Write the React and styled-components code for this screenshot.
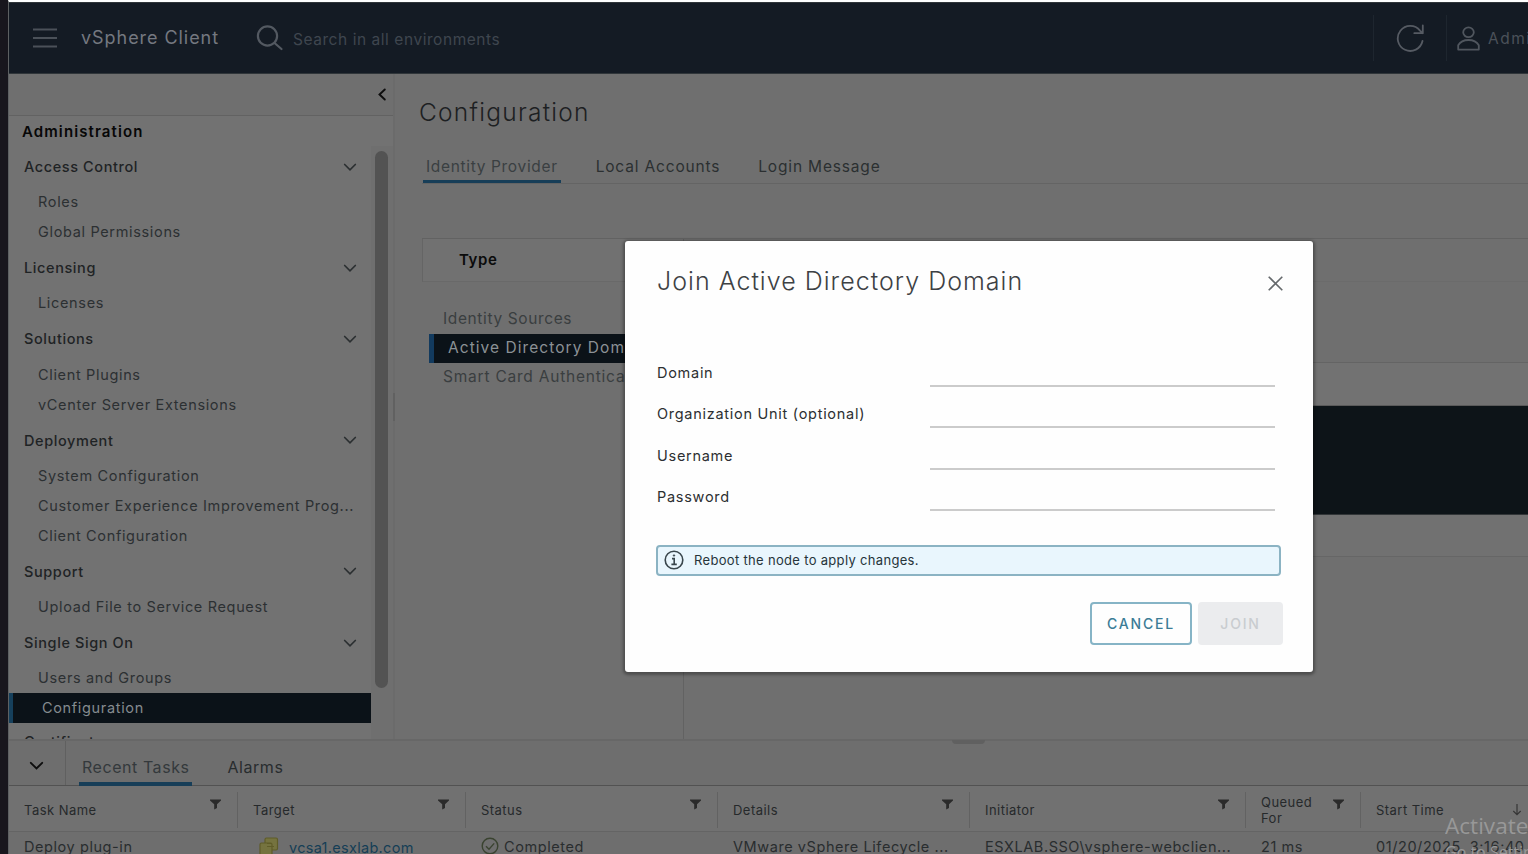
import React from "react";
import styled, { createGlobalStyle, css } from "styled-components";

const GlobalStyle = createGlobalStyle`
  * { box-sizing: border-box; }
  body { margin: 0; overflow: hidden; background: #6f6f6f; }
  button, input { font: inherit; }
  svg { flex: none; }
`;

const Screen = styled.div`
  position: relative;
  width: 1528px;
  height: 854px;
  overflow: hidden;
  display: flex;
  font-family: Inter, "Liberation Sans", sans-serif;
  background: #6f6f6f;
  color: #26292b;
`;
const DesktopEdge = styled.div`
  width: 8px;
  flex: none;
  background: #18161d;
`;
const Browser = styled.div`
  width: 1520px;
  flex: none;
  display: flex;
  flex-direction: column;
  border-top: 2px solid #fdfefe;
  border-left: 1px solid #5d6062;
`;

/* Header */
const Header = styled.header`
  height: 72px;
  flex: none;
  display: flex;
  align-items: center;
  background: #141b24;
  border-top: 1px solid #30363a;
  border-bottom: 1px solid #30363a;
  color: #666b73;
`;
const MenuButton = styled.div`
  width: 72px;
  padding-left: 24px;
  display: flex;
`;
const Brand = styled.div`
  width: 175px;
  font-size: 18px;
  letter-spacing: 0.95px;
  color: #747880;
  line-height: 24px;
  white-space: nowrap;
`;
const SearchHint = styled.div`
  flex: 1;
  margin-left: 9px;
  padding-top: 2px;
  font-size: 15.5px;
  letter-spacing: 0.55px;
  color: #3f464f;
  white-space: nowrap;
`;
const HeaderCell = styled.div`
  width: ${(p) => p.$width}px;
  flex: none;
  height: 46px;
  display: flex;
  align-items: center;
  gap: 8px;
  padding-left: ${(p) => p.$pad}px;
  border-left: 1px solid #1e262f;
  font-size: 15.5px;
  letter-spacing: 1.5px;
  color: #4b5159;
  overflow: hidden;
`;

/* Middle */
const Middle = styled.div`
  height: 665px;
  flex: none;
  display: flex;
`;
const Sidebar = styled.aside`
  width: 384px;
  flex: none;
  display: flex;
  flex-direction: column;
  background: #727272;
`;
const SidebarTop = styled.div`
  height: 42px;
  flex: none;
  display: flex;
  justify-content: flex-end;
  padding: 13px 3px 0 0;
  background: #6f6f6f;
  border-bottom: 1px solid #626262;
`;
const SidebarTitle = styled.div`
  height: 30px;
  flex: none;
  padding: 0 0 0 13px;
  font-size: 15px;
  font-weight: 600;
  line-height: 31px;
  letter-spacing: 1.1px;
  color: #070707;
`;
const NavArea = styled.div`
  flex: 1;
  min-height: 0;
  display: flex;
`;
const NavList = styled.nav`
  width: 362px;
  overflow: hidden;
`;
const NavGroup = styled.div`
  height: 41.2px;
  display: flex;
  align-items: center;
  justify-content: space-between;
  padding: 0 14px 0 15px;
  font-size: 14.5px;
  font-weight: 500;
  letter-spacing: 0.6px;
  color: #1f2325;
  &:last-child {
    height: 37px;
  }
`;
const NavItem = styled.div`
  height: 30px;
  line-height: 29px;
  padding-left: 29px;
  font-size: 14.5px;
  letter-spacing: 0.66px;
  white-space: nowrap;
  color: #2c3032;
  ${(p) =>
    p.$active &&
    css`
      background: #0b1218;
      color: #858b8f;
      border-left: 4px solid #16405c;
    `}
`;
const ScrollTrack = styled.div`
  width: 22px;
  padding: 5px 5px 51px 4px;
  background: #6f6f6f;
`;
const ScrollThumb = styled.div`
  height: 537px;
  border-radius: 7px;
  background: #535353;
`;
const Splitter = styled.div`
  width: 2px;
  flex: none;
  display: flex;
  align-items: center;
  background: #6b6b6b;
`;
const SplitterGrip = styled.div`
  width: 2px;
  height: 28px;
  background: #616161;
`;

/* Main */
const Main = styled.main`
  flex: 1;
  padding: 21px 0 0 27px;
  display: flex;
  flex-direction: column;
`;
const PageTitle = styled.h1`
  margin: 0 0 0 -3px;
  font-size: 24.5px;
  font-weight: 300;
  line-height: 34px;
  letter-spacing: 1.25px;
  color: #1d2022;
`;
const Tabs = styled.div`
  height: 55px;
  display: flex;
  gap: 32px;
  padding-left: 1px;
  border-bottom: 1px solid #646464;
`;
const Tab = styled.div`
  height: 100%;
  padding: 0 3px 3px;
  display: flex;
  align-items: flex-end;
  font-size: 15.5px;
  line-height: 20px;
  letter-spacing: ${(p) => (p.$active ? 0.66 : 0.83)}px;
  white-space: nowrap;
  color: #2b2f31;
  border-bottom: 3px solid ${(p) => (p.$active ? "#173e58" : "transparent")};
  ${(p) => p.$active && "color: #3a3f42;"}
`;
const Panes = styled.div`
  flex: 1;
  margin-top: 54px;
  display: flex;
  border-top: 1px solid #626262;
`;
const TypePane = styled.div`
  width: 261px;
  flex: none;
`;
const TypeHeader = styled.div`
  height: 43px;
  padding-left: 36px;
  line-height: 42px;
  font-size: 15px;
  font-weight: 600;
  letter-spacing: 0.6px;
  color: #0b0b0b;
  background: #717171;
  border-left: 1px solid #656565;
  border-bottom: 1px solid #696969;
  margin-bottom: 23px;
`;
const TypeItem = styled.div`
  height: 29px;
  line-height: 28px;
  margin-left: 7px;
  padding-left: 14px;
  font-size: 15.5px;
  letter-spacing: 0.62px;
  color: #3a3e40;
  white-space: nowrap;
  overflow: hidden;
  &:last-child {
    letter-spacing: 0.78px;
  }
  ${(p) =>
    p.$active &&
    css`
      color: #8b9195;
      letter-spacing: 1.05px;
      background: #0b1218;
      border-left: 5px solid #123a5e;
    `}
`;
const Detail = styled.div`
  flex: 1;
  border-left: 1px solid #626262;
`;
const DetailBand = styled.div`
  height: ${(p) => p.$height}px;
  background: ${(p) => p.$bg || "transparent"};
  border-bottom: 1px solid ${(p) => p.$line};
`;

/* Tasks panel */
const TaskPanel = styled.section`
  flex: 1;
  display: flex;
  flex-direction: column;
  border-top: 2px solid #676767;
  background: #6e6e6e;
`;
const TaskBar = styled.div`
  height: 45px;
  flex: none;
  display: flex;
  border-bottom: 1px solid #525252;
`;
const Collapse = styled.div`
  width: 57px;
  padding: 16px 0 0 20px;
  margin-right: 13px;
  border-right: 1px solid #606060;
`;
const TaskTab = styled.div`
  height: 45px;
  padding: 15px 3px 0;
  margin-right: 32px;
  font-size: 16px;
  line-height: 23px;
  letter-spacing: 0.55px;
  color: ${(p) => (p.$active ? "#34393c" : "#282c2e")};
  border-bottom: 4px solid ${(p) => (p.$active ? "#173e58" : "transparent")};
`;
const Grid = styled.div`
  display: grid;
  grid-template-columns: 229px 228px 252px 252px 276px 115px 200px;
`;
const HeadCell = styled.div`
  height: 46px;
  padding: 6px 0 4px;
  border-bottom: 1px solid #646464;
  background: #717171;
`;
const HeadInner = styled.div`
  height: 36px;
  display: flex;
  justify-content: space-between;
  align-items: center;
  padding: 0 16px 0 15px;
  border-right: 1px solid #626262;
  font-size: 13px;
  line-height: 16px;
  letter-spacing: 0.46px;
  color: #26292b;
`;
const FilterSlot = styled.span`
  display: flex;
  align-self: flex-start;
  padding-top: 7px;
`;
const SortSlot = styled.span`
  display: flex;
  width: 32px;
`;
const Cell = styled.div`
  height: 40px;
  display: flex;
  gap: 5px;
  padding: 5px 0 0 ${(p) => p.$pad || 15}px;
  font-size: 14.5px;
  line-height: 20px;
  letter-spacing: 0.57px;
  white-space: nowrap;
  color: #292d2f;
`;
const TargetLink = styled.span`
  padding-left: 5px;
  line-height: 22px;
  letter-spacing: 0.3px;
  color: #153e56;
`;
const PanelGrip = styled.div`
  position: absolute;
  left: 952px;
  top: 740px;
  width: 33px;
  height: 4px;
  border-radius: 0 0 4px 4px;
  background: #606060;
`;

/* Dialog */
const Dialog = styled.div`
  position: absolute;
  left: 625px;
  top: 241px;
  width: 688px;
  height: 431px;
  padding: 23px 30px 0 32px;
  background: #fefefe;
  border-radius: 3px;
  box-shadow: 0 1px 3px 2px rgba(0, 0, 0, 0.3);
  color: #303335;
`;
const DialogHead = styled.div`
  height: 88px;
  display: flex;
  justify-content: space-between;
  align-items: flex-start;
`;
const DialogTitle = styled.h2`
  margin: 0;
  font-size: 25px;
  font-weight: 300;
  line-height: 34px;
  letter-spacing: 1.02px;
  color: #3d4144;
`;
const CloseButton = styled.div`
  padding: 11px 0 0;
`;
const Field = styled.label`
  height: 41.4px;
  display: flex;
  justify-content: space-between;
  padding-right: 8px;
  font-size: 14.5px;
  letter-spacing: 0.72px;
  line-height: 41px;
  color: #2c2f31;
`;
const Input = styled.input`
  width: 345px;
  height: 35px;
  border: 0;
  border-bottom: 2px solid #cbcbcb;
  border-radius: 0;
  background: transparent;
  outline: none;
`;
const Notice = styled.div`
  height: 31px;
  margin: 27px 2px 26px -1px;
  padding-left: 6px;
  display: flex;
  align-items: center;
  gap: 10px;
  border: 2px solid #8bb3c3;
  border-radius: 4px;
  background: #e9f6fd;
  font-size: 13px;
  letter-spacing: 0.32px;
  color: #26343a;
`;
const Actions = styled.div`
  display: flex;
  justify-content: flex-end;
  gap: 6px;
`;
const Button = styled.button`
  width: ${(p) => p.$width}px;
  height: 43px;
  padding: 0;
  border-radius: 4px;
  font-size: 14px;
  font-weight: 500;
  letter-spacing: 1.8px;
  color: #3c7c96;
  background: #fefefe;
  border: 2px solid #86b4c6;
  &:disabled {
    color: #c9ccd0;
    background: #ebecee;
    border-color: #ebecee;
  }
`;
const Watermark = styled.div`
  position: absolute;
  left: 1445px;
  top: 810px;
  width: 83px;
  height: 44px;
  overflow: hidden;
  white-space: nowrap;
  font-family: "Open Sans", sans-serif;
  color: #989898;
`;
const WatermarkTitle = styled.div`
  font-size: 22.6px;
  line-height: 32px;
`;
const WatermarkNote = styled.div`
  font-size: 16px;
  line-height: 20px;
`;

const Chevron = ({ size = 14, d = "M1.800 4.800 7.500 10.500 13.200 4.800", color = "#2b2f31", w = 1.8 }) => (
  <svg width={size} height={size} viewBox="0 0 15 15" fill="none" stroke={color} strokeWidth={w}>
    <path d={d} strokeLinecap="round" />
  </svg>
);
const Funnel = () => (
  <svg width="11" height="11" viewBox="0 0 11 11">
    <path d="M0 .5h11v1L7 5.300V9L4.200 10.500v-5.200L0 1.500z" fill="#2a2a2a" />
  </svg>
);
const SortArrow = () => (
  <svg width="10" height="12" viewBox="0 0 10 12" fill="none" stroke="#363636" strokeWidth="1.2">
    <path d="M5 0v10.500M1.300 7 5 10.700 8.700 7" />
  </svg>
);

const groups = [
  ["Access Control", ["Roles", "Global Permissions"]],
  ["Licensing", ["Licenses"]],
  ["Solutions", ["Client Plugins", "vCenter Server Extensions"]],
  ["Deployment", ["System Configuration", "Customer Experience Improvement Prog...", "Client Configuration"]],
  ["Support", ["Upload File to Service Request"]],
  ["Single Sign On", ["Users and Groups", "Configuration"]],
  ["Certificates", []],
];
const fields = ["Domain", "Organization Unit (optional)", "Username", "Password"];
const columns = ["Task Name", "Target", "Status", "Details", "Initiator", "Queued For", "Start Time"];

export default function App() {
  return (
    <Screen>
      <GlobalStyle />
      <DesktopEdge />
      <Browser>
        <Header>
          <MenuButton>
            <svg width="24" height="20" viewBox="0 0 24 20" stroke="#4b5159" strokeWidth="1.800">
              <path d="M0 1.500h24M0 10h24M0 18.500h24" />
            </svg>
          </MenuButton>
          <Brand>vSphere Client</Brand>
          <svg width="28" height="28" viewBox="0 0 28 28" fill="none" stroke="#535961" strokeWidth="2.200">
            <circle cx="11.500" cy="12" r="9.600" />
            <path d="m18.500 19 7 6" strokeLinecap="round" />
          </svg>
          <SearchHint>Search in all environments</SearchHint>
          <HeaderCell $width={73} $pad={22}>
            <svg width="29" height="30" viewBox="0 0 29 30" fill="none" stroke="#565b63" strokeWidth="1.800">
              <path d="M26.500 18A12.500 12.500 0 1 1 24 7.600L26.600 10.200M26.800 2.500v7.700h-8.500" strokeLinecap="round" strokeLinejoin="round" />
            </svg>
          </HeaderCell>
          <HeaderCell $width={82} $pad={10}>
            <svg width="23" height="25" viewBox="0 0 23 25" fill="none" stroke="#50565e" strokeWidth="1.800">
              <ellipse cx="11.500" cy="6.300" rx="5.300" ry="4.900" />
              <path d="M1.200 23.600v-4.400c2.200-3.800 5.600-5.200 10.300-5.200s8.100 1.400 10.300 5.200v4.400z" strokeLinejoin="round" />
            </svg>
            Administrator
          </HeaderCell>
        </Header>
        <Middle>
          <Sidebar>
            <SidebarTop>
              <Chevron size={15} d="M9.800 2.500 4.500 7.500 9.800 12.500" color="#0d0d0d" w={1.9} />
            </SidebarTop>
            <SidebarTitle>Administration</SidebarTitle>
            <NavArea>
              <NavList>
                {groups.map(([name, items]) => (
                  <React.Fragment key={name}>
                    <NavGroup>
                      {name}
                      {items.length > 0 && <Chevron />}
                    </NavGroup>
                    {items.map((item) => (
                      <NavItem key={item} $active={item === "Configuration"}>
                        {item}
                      </NavItem>
                    ))}
                  </React.Fragment>
                ))}
              </NavList>
              <ScrollTrack>
                <ScrollThumb />
              </ScrollTrack>
            </NavArea>
          </Sidebar>
          <Splitter>
            <SplitterGrip />
          </Splitter>
          <Main>
            <PageTitle>Configuration</PageTitle>
            <Tabs>
              <Tab $active>Identity Provider</Tab>
              <Tab>Local Accounts</Tab>
              <Tab>Login Message</Tab>
            </Tabs>
            <Panes>
              <TypePane>
                <TypeHeader>Type</TypeHeader>
                <TypeItem>Identity Sources</TypeItem>
                <TypeItem $active>Active Directory Domain</TypeItem>
                <TypeItem>Smart Card Authentication</TypeItem>
              </TypePane>
              <Detail>
                <DetailBand $height={43} $line="#6b6b6b" />
                <DetailBand $height={81} $line="#646464" />
                <DetailBand $height={43} $bg="#727272" $line="#5a5a5a" />
                <DetailBand $height={109} $bg="#0d1418" $line="#323638" />
                <DetailBand $height={42} $bg="#717171" $line="#666666" />
              </Detail>
            </Panes>
          </Main>
        </Middle>
        <TaskPanel>
          <TaskBar>
            <Collapse>
              <Chevron size={15} color="#0d0d0d" w={1.9} />
            </Collapse>
            <TaskTab $active>Recent Tasks</TaskTab>
            <TaskTab>Alarms</TaskTab>
          </TaskBar>
          <Grid>
            {columns.map((c) => (
              <HeadCell key={c}>
                <HeadInner>
                  {c === "Queued For" ? <span>Queued<br />For</span> : c}
                  {c === "Start Time" ? (
                    <SortSlot><SortArrow /></SortSlot>
                  ) : (
                    <FilterSlot><Funnel /></FilterSlot>
                  )}
                </HeadInner>
              </HeadCell>
            ))}
            <Cell>Deploy plug-in</Cell>
            <Cell $pad={21}>
              <svg width="20" height="20" viewBox="0 0 20 20" fill="#75733f" stroke="#5f5c28" strokeWidth="1.200">
                <rect x="6" y="1" width="12.500" height="12" rx="1.500" />
                <rect x="1" y="6" width="12" height="12.500" rx="1.500" />
                <path d="M8 9.500h7M8 6.500h4" />
              </svg>
              <TargetLink>vcsa1.esxlab.com</TargetLink>
            </Cell>
            <Cell $pad={15}>
              <svg width="18" height="18" viewBox="0 0 18 18" fill="none" stroke="#3a4330" strokeWidth="1.400">
                <circle cx="9" cy="9" r="7.800" />
                <path d="m5 9.200 3 3 5.200-5.800" />
              </svg>
              Completed
            </Cell>
            <Cell>VMware vSphere Lifecycle ...</Cell>
            <Cell>ESXLAB.SSO\vsphere-webclien...</Cell>
            <Cell>21 ms</Cell>
            <Cell>01/20/2025, 3:16:40</Cell>
          </Grid>
        </TaskPanel>
      </Browser>
      <PanelGrip />
      <Dialog>
        <DialogHead>
          <DialogTitle>Join Active Directory Domain</DialogTitle>
          <CloseButton>
            <svg width="15" height="15" viewBox="0 0 15 15" stroke="#65696c" strokeWidth="1.600">
              <path d="m.7.700 13.600 13.600M14.300.700.700 14.300" />
            </svg>
          </CloseButton>
        </DialogHead>
        {fields.map((f) => (
          <Field key={f}>
            {f}
            <Input type="text" />
          </Field>
        ))}
        <Notice>
          <svg width="20" height="20" viewBox="0 0 20 20" fill="none" stroke="#39464c" strokeWidth="1.600">
            <circle cx="10" cy="10" r="8.800" />
            <path d="M8 8.600h2.200v5.600M7.400 14.400h5.400" />
            <circle cx="10" cy="5.500" r=".7" fill="#39464c" strokeWidth="1" />
          </svg>
          Reboot the node to apply changes.
        </Notice>
        <Actions>
          <Button $width={102}>CANCEL</Button>
          <Button $width={85} disabled>JOIN</Button>
        </Actions>
      </Dialog>
      <Watermark>
        <WatermarkTitle>Activate Windows</WatermarkTitle>
        <WatermarkNote>Go to Settings to activate</WatermarkNote>
      </Watermark>
    </Screen>
  );
}
